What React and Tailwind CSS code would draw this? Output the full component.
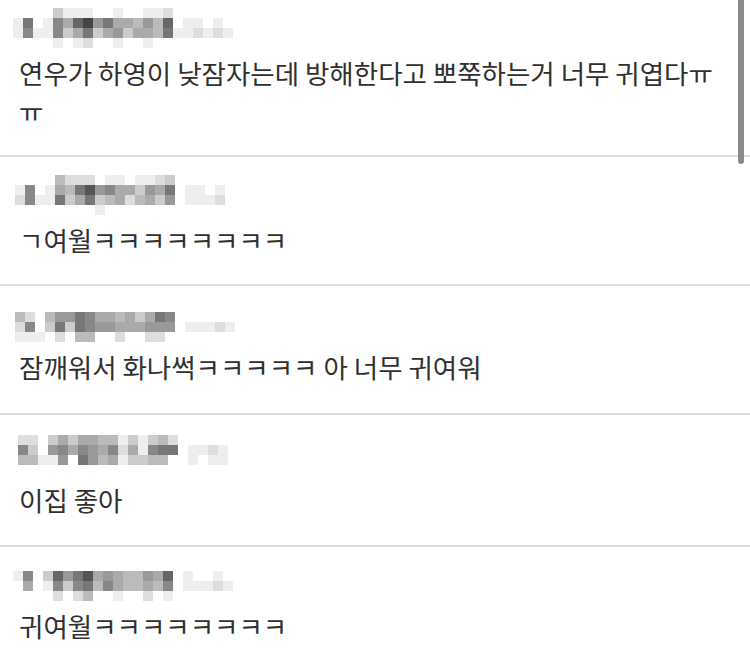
import React from 'react';

// pixelated nicknames, one hex digit per 10px cell (f = white, 0 = black)
const comments = [
  {
    mosaic: [
      'ffffceeeffeffeedffffff',
      'e7fe8a6497aab9b6feefef',
      'e8ee8ca7ca9caab7eedede',
      'ffffefedffeffeffffffff',
    ],
    offset: 'ml-[0px] mt-[0px]',
    pad: 'pt-[8px] pb-[25px]',
    lines: ['연우가 하영이 낮잠자는데 방해한다고 뽀쭉하는거 너무 귀엽다ㅠ', 'ㅠ'],
  },
  {
    mosaic: [
      'ffffbdddfeefeedcfffff',
      'e8feab7598aac9a7feefe',
      'd8ee7ca7cbadbac9feeed',
      'ffffffffeffffffffffff',
    ],
    offset: 'ml-[2px] mt-[2px]',
    pad: 'pt-[16px] pb-[25px]',
    lines: ['ㄱ여월ㅋㅋㅋㅋㅋㅋㅋㅋ'],
  },
  {
    mosaic: [
      'ffffffffffffffffffffff',
      'bdfb9978aabaca78ffffff',
      'd8fc7c7899aaa999feeede',
      'eeefdfbbffdffddfffffff',
    ],
    offset: 'ml-[2px] mt-[0px]',
    pad: 'pt-[16px] pb-[27px]',
    lines: ['잠깨워서 화나썩ㅋㅋㅋㅋㅋ 아 너무 귀여워'],
  },
  {
    mosaic: [
      'ddfcacaabbececbdffffff',
      '8cf98a89a8dae877feedef',
      'bbee9f79baeccbbffefeef',
      'ffffffffffffffffffffff',
    ],
    offset: 'ml-[5px] mt-[4px]',
    pad: 'pt-[16px] pb-[26px]',
    lines: ['이집 좋아'],
  },
  {
    mosaic: [
      'ffffffffffffffffffffff',
      'e8fc6975a9abb9a6feffef',
      'fafe8c87b8abbab8feeede',
      'ffffdfdbffeffdfeffffff',
    ],
    offset: 'ml-[0px] mt-[-2px]',
    pad: 'pt-[16px] pb-[25px]',
    lines: ['귀여월ㅋㅋㅋㅋㅋㅋㅋㅋ'],
  },
];

function Mosaic({ rows, className }) {
  const cols = rows[0].length;
  return (
    <svg
      width={cols * 10}
      height={rows.length * 10}
      className={`block ${className}`}
      shapeRendering="crispEdges"
    >
      {rows.map((row, y) =>
        row.split('').map((c, x) => {
          const v = parseInt(c, 16) * 17;
          if (v === 255) return null;
          return (
            <rect
              key={`${x}-${y}`}
              x={x * 10}
              y={y * 10}
              width={10}
              height={10}
              fill={`rgb(${v},${v},${v})`}
            />
          );
        })
      )}
    </svg>
  );
}

export default function App() {
  return (
    <div
      className="relative h-[669px] w-[750px] overflow-hidden bg-white text-[#303030]"
      style={{ fontFamily: '"Noto Sans CJK KR", "Noto Sans", sans-serif' }}
    >
      {comments.map((item, i) => (
        <div key={i} className={`border-b-2 border-[#dddddd] pl-[13px] ${item.pad}`}>
          <div className="h-[40px]">
            <Mosaic rows={item.mosaic} className={item.offset} />
          </div>
          <div className="mt-[6px] pl-[6px] text-[26.5px] leading-[38px] whitespace-nowrap">
            {item.lines.map((line, j) => (
              <div key={j}>{line}</div>
            ))}
          </div>
        </div>
      ))}

      {/* scrollbar thumb */}
      <div className="absolute right-[6px] top-0 h-[164px] w-[6px] rounded-b-full bg-[#8a8a8a]" />
    </div>
  );
}
